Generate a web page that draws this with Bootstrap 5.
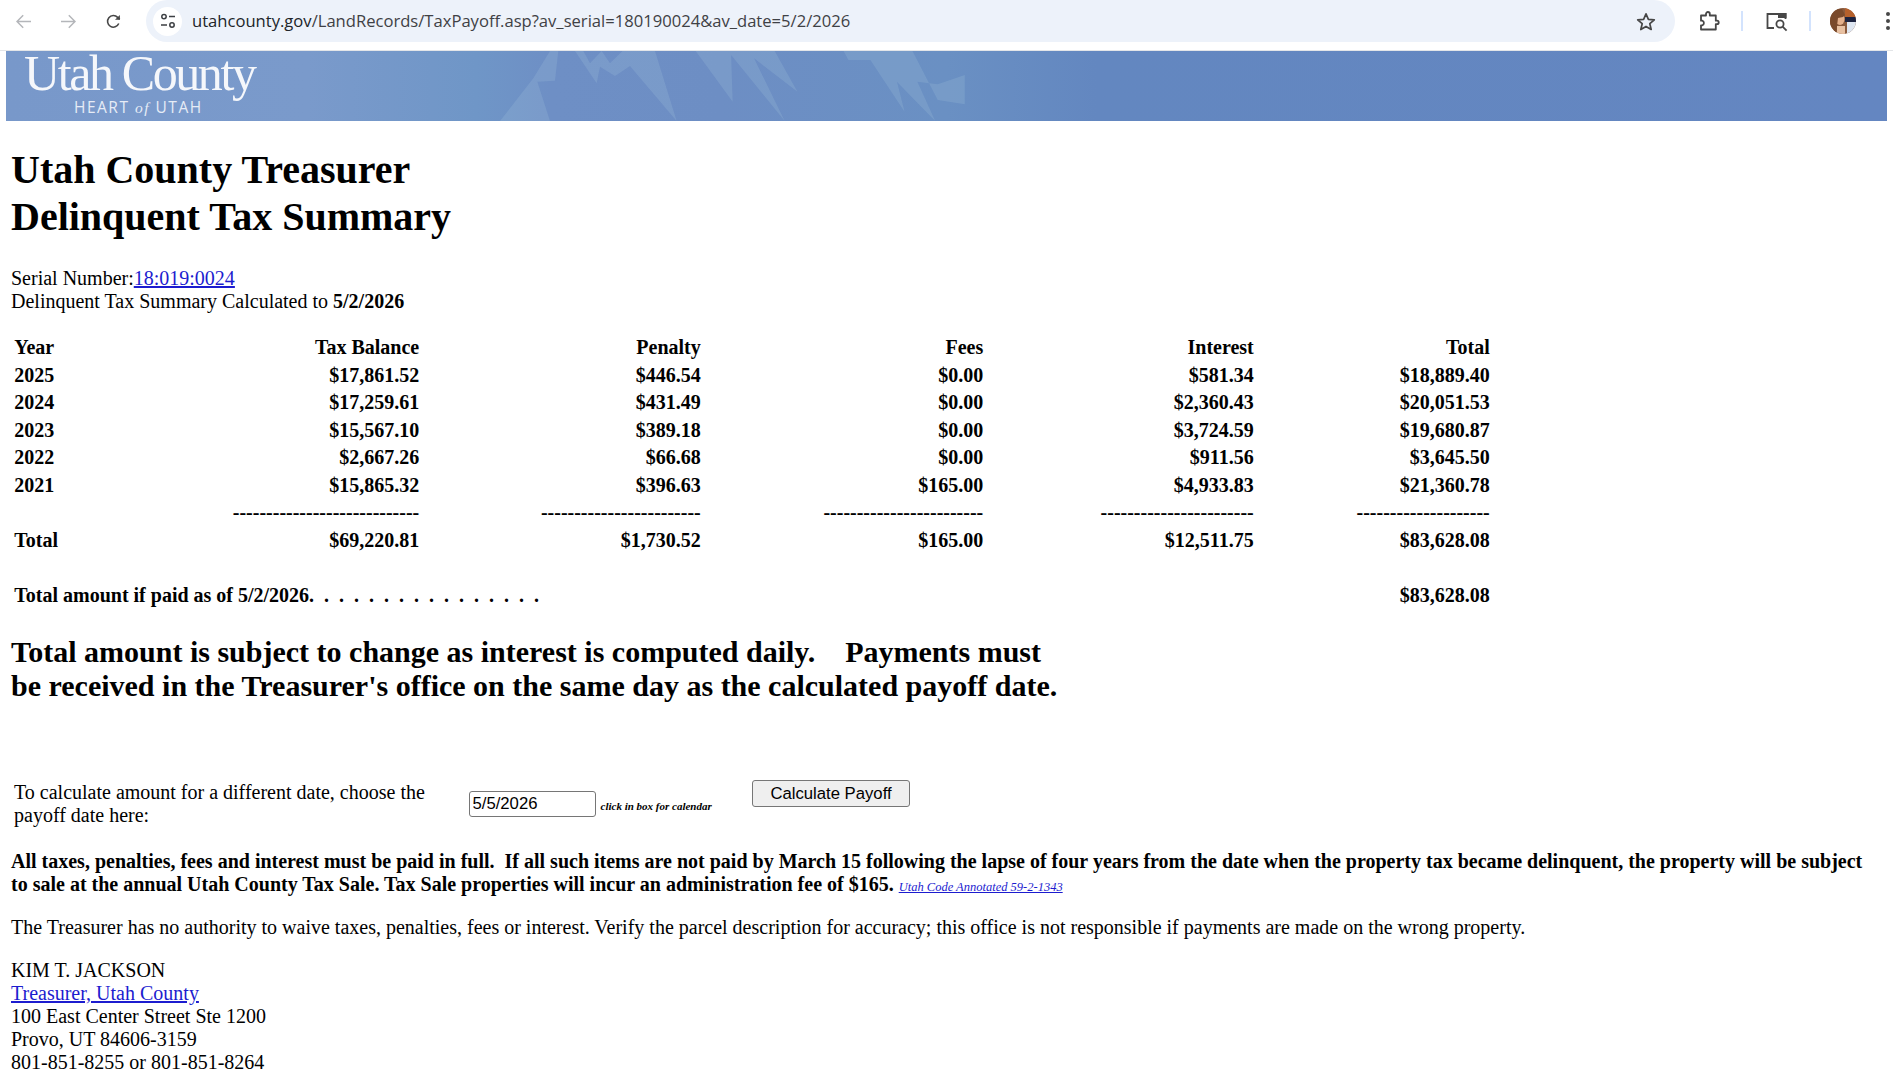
<!DOCTYPE html>
<html lang="en">
<head>
    <meta charset="utf-8">
    <title>Delinquent Tax Summary</title>
    <link href="https://cdn.jsdelivr.net/npm/bootstrap@5.3.0/dist/css/bootstrap.min.css" rel="stylesheet">
    <style>
        html, body { height: 100%; overflow: hidden; }
        body { font-family: "Liberation Serif", "Times New Roman", serif; font-size: 20px; line-height: 23px; color: #000; background: #fff; }
        a { color: #1c1ccf; }

        /* browser toolbar */
        .toolbar { height: 51px; border-bottom: 1px solid #e3e5e8; font-family: "Open Sans", "Noto Sans", sans-serif; }
        .tb-group { height: 42px; }
        .tb-icon { width: 15px; height: 15px; flex: none; margin-left: 30px; }
        .tb-icon:first-child { margin-left: 16px; }
        .omnibox { width: 1529px; height: 42px; margin-left: 25px; background: #edf2fa; border-radius: 21px; padding-left: 7px; flex: none; }
        .site-chip { width: 29px; height: 29px; background: #fff; border-radius: 50%; flex: none; }
        .url { margin-left: 10px; font-size: 16.6px; line-height: 42px; color: #3f4145; white-space: nowrap; flex: 1; }
        .star { margin-right: 19px; }
        .sep { width: 2px; height: 20px; background: #d3e3fd; flex: none; }
        .puzzle { margin-left: 24px; }
        .sep-1 { margin-left: 21px; }
        .lens { margin-left: 23px; }
        .sep-2 { margin-left: 20px; }
        .avatar { margin-left: 19px; }
        .menu { margin-left: 30px; }

        /* county banner */
        .banner { height: 70px; margin-left: 6px; width: 1881px; background: linear-gradient(90deg, #7898ca 0%, #7a9acb 16%, #6f96c7 25%, #6e8fc5 29%, #6d8ec4 38%, #6a90c3 50%, #6387c0 58%, #6486c1 100%); }
        .banner svg { position: absolute; inset: 0; }
        .logo { position: relative; color: #f5f7fb; }
        .logo-name { font-size: 50px; line-height: 44px; letter-spacing: -2.4px; padding-left: 18px; }
        .logo-sub { font-family: "Open Sans", sans-serif; font-size: 15.5px; line-height: 20px; letter-spacing: 1.5px; padding-left: 68px; margin-top: 2px; color: #e6ecf6; }
        .logo-sub i { font-family: "Liberation Serif", serif; }

        /* page */
        .page { padding-left: 11px; }
        h1.title { font-size: 40px; line-height: 47px; font-weight: 700; margin: 25px 0 27px; }
        .summary { border-collapse: separate; border-spacing: 2px; table-layout: fixed; width: 1482px; margin: 20px 0 0; font-weight: 700; }
        .summary td { padding: 1.25px; }
        .summary td + td { text-align: right; }
        .c1 { width: 170.5px; } .c2 { width: 235px; } .c3 { width: 279.5px; } .c4 { width: 280.5px; } .c5 { width: 268.5px; } .c6 { width: 234px; }
        .dots { white-space: pre; }
        .notice { font-size: 30px; line-height: 34px; font-weight: 700; margin: 24.5px 0 0; white-space: nowrap; }

        .date-row { margin-top: 77.7px; padding-left: 3px; }
        .date-label { width: 454.5px; padding-right: 20px; margin-top: 1.2px; flex: none; }
        .date-input { width: 127px; height: 26px; padding: 0 3px; border: 1px solid #767676; border-radius: 3px; font-family: "Liberation Sans", Arial, sans-serif; font-size: 16.7px; color: #000; margin-top: 11px; flex: none; }
        .date-hint { font-size: 11px; font-weight: 700; font-style: italic; width: 156.5px; padding-left: 5px; margin-top: 19px; flex: none; line-height: 14px; }
        .date-btn { width: 158px; height: 27px; padding: 0; background: #efefef; border: 1px solid #767676; border-radius: 3px; font-family: "Liberation Sans", Arial, sans-serif; font-size: 16.7px; line-height: 23px; color: #000; flex: none; }
        .terms { margin: 23px 20px 0 0; font-weight: 700; }
        .terms a { font-size: 12.5px; line-height: 1; font-weight: 400; font-style: italic; }
        .disclaimer { margin: 20px 0 0; }
        .contact { margin-top: 20px; }
    </style>
</head>
<body>
    <!-- browser toolbar -->
    <div class="toolbar d-flex align-items-start">
        <div class="tb-group d-flex align-items-center">
            <svg class="tb-icon" viewBox="0 0 15 14" fill="none" stroke="#b4b6ba" stroke-width="1.5"><path d="M15 7H1M7.2 .8 1 7l6.2 6.2"/></svg>
            <svg class="tb-icon" viewBox="0 0 15 14" fill="none" stroke="#b4b6ba" stroke-width="1.5"><path d="M0 7h14M7.8 .8 14 7l-6.2 6.2"/></svg>
            <svg class="tb-icon" viewBox="0 0 16 16" fill="none" stroke="#474747" stroke-width="1.7"><path d="M13.6 10.2A6.2 6.2 0 1 1 12.4 3.6L14.6 5.8"/><path d="M14.8 1v5.2H9.6" stroke="none" fill="#474747"/></svg>
        </div>
        <div class="omnibox d-flex align-items-center">
            <div class="site-chip d-flex align-items-center justify-content-center">
                <svg width="16" height="16" viewBox="0 0 16 16" fill="none" stroke="#3c3f43" stroke-width="1.5"><circle cx="4" cy="3.6" r="2.2"/><path d="M9 3.6h6M1 12h6"/><circle cx="12" cy="12" r="2.2"/></svg>
            </div>
            <div class="url"><span class="text-dark">utahcounty.gov</span>/LandRecords/TaxPayoff.asp?av_serial=180190024&amp;av_date=5/2/2026</div>
            <svg class="star" width="20" height="19" viewBox="0 0 20 19" fill="none" stroke="#474747" stroke-width="1.7" stroke-linejoin="round"><path d="M10 1.8 12.4 7.3 18.3 7.8 13.8 11.7 15.2 17.5 10 14.4 4.8 17.5 6.2 11.7 1.7 7.8 7.6 7.3Z"/></svg>
        </div>
        <div class="tb-group d-flex align-items-center">
            <svg class="puzzle" width="21" height="21" viewBox="0 0 21 21" fill="none" stroke="#474747" stroke-width="1.8" stroke-linejoin="round"><path d="M2 5h5V3.4a1.9 1.9 0 0 1 3.8 0V5h6v5.2h1.2a1.7 1.7 0 0 1 0 3.4H16.8V19H2v-4.2h1.2a2.4 2.4 0 0 0 0-4.6H2Z" transform="translate(0 -.5)"/></svg>
            <div class="sep sep-1"></div>
            <svg class="lens" width="23" height="21" viewBox="0 0 23 21" fill="none" stroke="#474747" stroke-width="1.8"><path d="M8 17H1.5V3h18v5"/><rect x="12" y="2" width="8.5" height="5" fill="#474747" stroke="none"/><circle cx="14" cy="13" r="3.6"/><path d="m16.6 15.6 4 4"/></svg>
            <div class="sep sep-2"></div>
            <svg class="avatar" width="26" height="26" viewBox="0 0 26 26">
                <defs><clipPath id="av"><circle cx="13" cy="13" r="13"/></clipPath></defs>
                <g clip-path="url(#av)">
                    <rect width="26" height="26" fill="#8a5a3c"/>
                    <rect x="15" width="11" height="9" fill="#b5602c"/>
                    <rect x="15" y="9" width="11" height="5" fill="#1c2340"/>
                    <rect x="17" y="14" width="9" height="12" fill="#dfe7f2"/>
                    <ellipse cx="10" cy="11" rx="4.5" ry="6" fill="#e4b08c"/>
                    <path d="M7 18h8v8H7z" fill="#e8c1a2"/>
                    <path d="M0 6 6 1h6l3 6-2 2-5 1-2 16H0Z" fill="#7a4a2c"/>
                </g>
            </svg>
            <svg class="menu" width="4" height="18" viewBox="0 0 4 18" fill="#474747"><circle cx="2" cy="2" r="2"/><circle cx="2" cy="9" r="2"/><circle cx="2" cy="16" r="2"/></svg>
        </div>
    </div>

    <!-- county banner -->
    <div class="banner position-relative">
        <svg width="1881" height="70" viewBox="0 0 1881 70" aria-hidden="true">
            <g fill="#b8d8e4" fill-opacity=".16">
                <g transform="translate(494 -1) scale(.3333)">
                    <path d="M150 3H175L165 92 112 95 150 213H0L100 85Z"/>
                    <path d="M225 3 290 100 300 50 345 78 390 48 530 213 465 3H368L330 40 305 3 270 40 250 3Z"/>
                </g>
                <g transform="translate(294 -6) scale(.5102 .3333)">
                    <path d="M775 17 848 170 845 30 950 228 890 40 975 140 930 17Z"/>
                    <path d="M1065 17 1075 45H1118L1185 200 1170 110 1245 228 1210 110 1250 118 1303 90V178L1250 165 1200 17Z"/>
                </g>
            </g>
        </svg>
        <div class="logo">
            <div class="logo-name">Utah County</div>
            <div class="logo-sub">HEART <i>of</i> UTAH</div>
        </div>
    </div>

    <div class="page">
        <h1 class="title">Utah County Treasurer<br>Delinquent Tax Summary</h1>

        <div>Serial Number:<a href="#">18:019:0024</a><br>Delinquent Tax Summary Calculated to <b>5/2/2026</b></div>

        <table class="summary">
            <colgroup><col class="c1"><col class="c2"><col class="c3"><col class="c4"><col class="c5"><col class="c6"></colgroup>
            <tr><td>Year</td><td>Tax Balance</td><td>Penalty</td><td>Fees</td><td>Interest</td><td>Total</td></tr>
            <tr><td>2025</td><td>$17,861.52</td><td>$446.54</td><td>$0.00</td><td>$581.34</td><td>$18,889.40</td></tr>
            <tr><td>2024</td><td>$17,259.61</td><td>$431.49</td><td>$0.00</td><td>$2,360.43</td><td>$20,051.53</td></tr>
            <tr><td>2023</td><td>$15,567.10</td><td>$389.18</td><td>$0.00</td><td>$3,724.59</td><td>$19,680.87</td></tr>
            <tr><td>2022</td><td>$2,667.26</td><td>$66.68</td><td>$0.00</td><td>$911.56</td><td>$3,645.50</td></tr>
            <tr><td>2021</td><td>$15,865.32</td><td>$396.63</td><td>$165.00</td><td>$4,933.83</td><td>$21,360.78</td></tr>
            <tr><td>&nbsp;</td><td>----------------------------</td><td>------------------------</td><td>------------------------</td><td>-----------------------</td><td>--------------------</td></tr>
            <tr><td>Total</td><td>$69,220.81</td><td>$1,730.52</td><td>$165.00</td><td>$12,511.75</td><td>$83,628.08</td></tr>
            <tr><td colspan="6">&nbsp;</td></tr>
            <tr><td colspan="5" class="dots text-start">Total amount if paid as of 5/2/2026.  .  .  .  .  .  .  .  .  .  .  .  .  .  .  .</td><td>$83,628.08</td></tr>
        </table>

        <p class="notice">Total amount is subject to change as interest is computed daily. &nbsp;&nbsp; Payments must<br>be received in the Treasurer's office on the same day as the calculated payoff date.</p>

        <div class="date-row d-flex align-items-start">
            <div class="date-label">To calculate amount for a different date, choose the payoff date here:</div>
            <input class="date-input" type="text" value="5/5/2026">
            <div class="date-hint">click in box for calendar</div>
            <button class="date-btn" type="button">Calculate Payoff</button>
        </div>

        <p class="terms">All taxes, penalties, fees and interest must be paid in full.&nbsp; If all such items are not paid by March 15 following the lapse of four years from the date when the property tax became delinquent, the property will be subject to sale at the annual Utah County Tax Sale. Tax Sale properties will incur an administration fee of $165. <a href="#">Utah Code Annotated 59-2-1343</a></p>

        <p class="disclaimer">The Treasurer has no authority to waive taxes, penalties, fees or interest. Verify the parcel description for accuracy; this office is not responsible if payments are made on the wrong property.</p>

        <div class="contact">KIM T. JACKSON<br><a href="#">Treasurer, Utah County</a><br>100 East Center Street Ste 1200<br>Provo, UT 84606-3159<br>801-851-8255 or 801-851-8264</div>
    </div>

    <script src="https://cdn.jsdelivr.net/npm/bootstrap@5.3.0/dist/js/bootstrap.bundle.min.js"></script>
</body>
</html>
